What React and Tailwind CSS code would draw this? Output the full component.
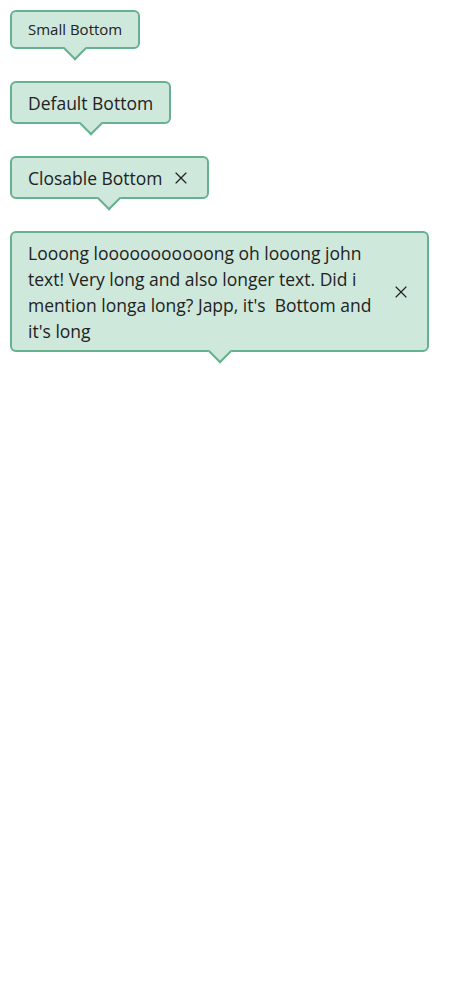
import { X } from 'lucide-react'

function Tip({ children, small, closable, className = '', textClass = '' }) {
  return (
    <div className={`relative inline-flex items-center gap-2 rounded-md border-2 border-[#66b18f] bg-[#cfe8dc] text-[#222] px-4 ${small ? 'py-[6px] text-[15px] leading-[23px]' : 'py-[6.5px] text-[17.5px] leading-[26px]'} ${className}`}>
      <div className={`${closable ? 'flex-1' : ''} ${textClass}`}>{children}</div>
      {closable && <X className="w-5 h-5 shrink-0 text-[#222]" strokeWidth={1.4} />}
      <span className="absolute left-1/2 -bottom-[10px] -translate-x-1/2 w-[17px] h-[17px] rotate-45 bg-[#cfe8dc] border-r-2 border-b-2 border-[#66b18f]" />
    </div>
  )
}

export default function App() {
  return (
    <div className="p-[10px] flex flex-col items-start gap-8 bg-white min-h-screen" style={{ fontFamily: '"Open Sans", "Liberation Sans", sans-serif' }}>
      <Tip small>Small Bottom</Tip>
      <Tip>Default Bottom</Tip>
      <Tip closable>Closable Bottom</Tip>
      <Tip closable className="w-[419px] gap-3" textClass="whitespace-nowrap min-w-0">
        Looong looooooooooong oh looong john<br />
        text! Very long and also longer text. Did i<br />
        mention longa long? Japp, it's&nbsp; Bottom and<br />
        it's long
      </Tip>
    </div>
  )
}
